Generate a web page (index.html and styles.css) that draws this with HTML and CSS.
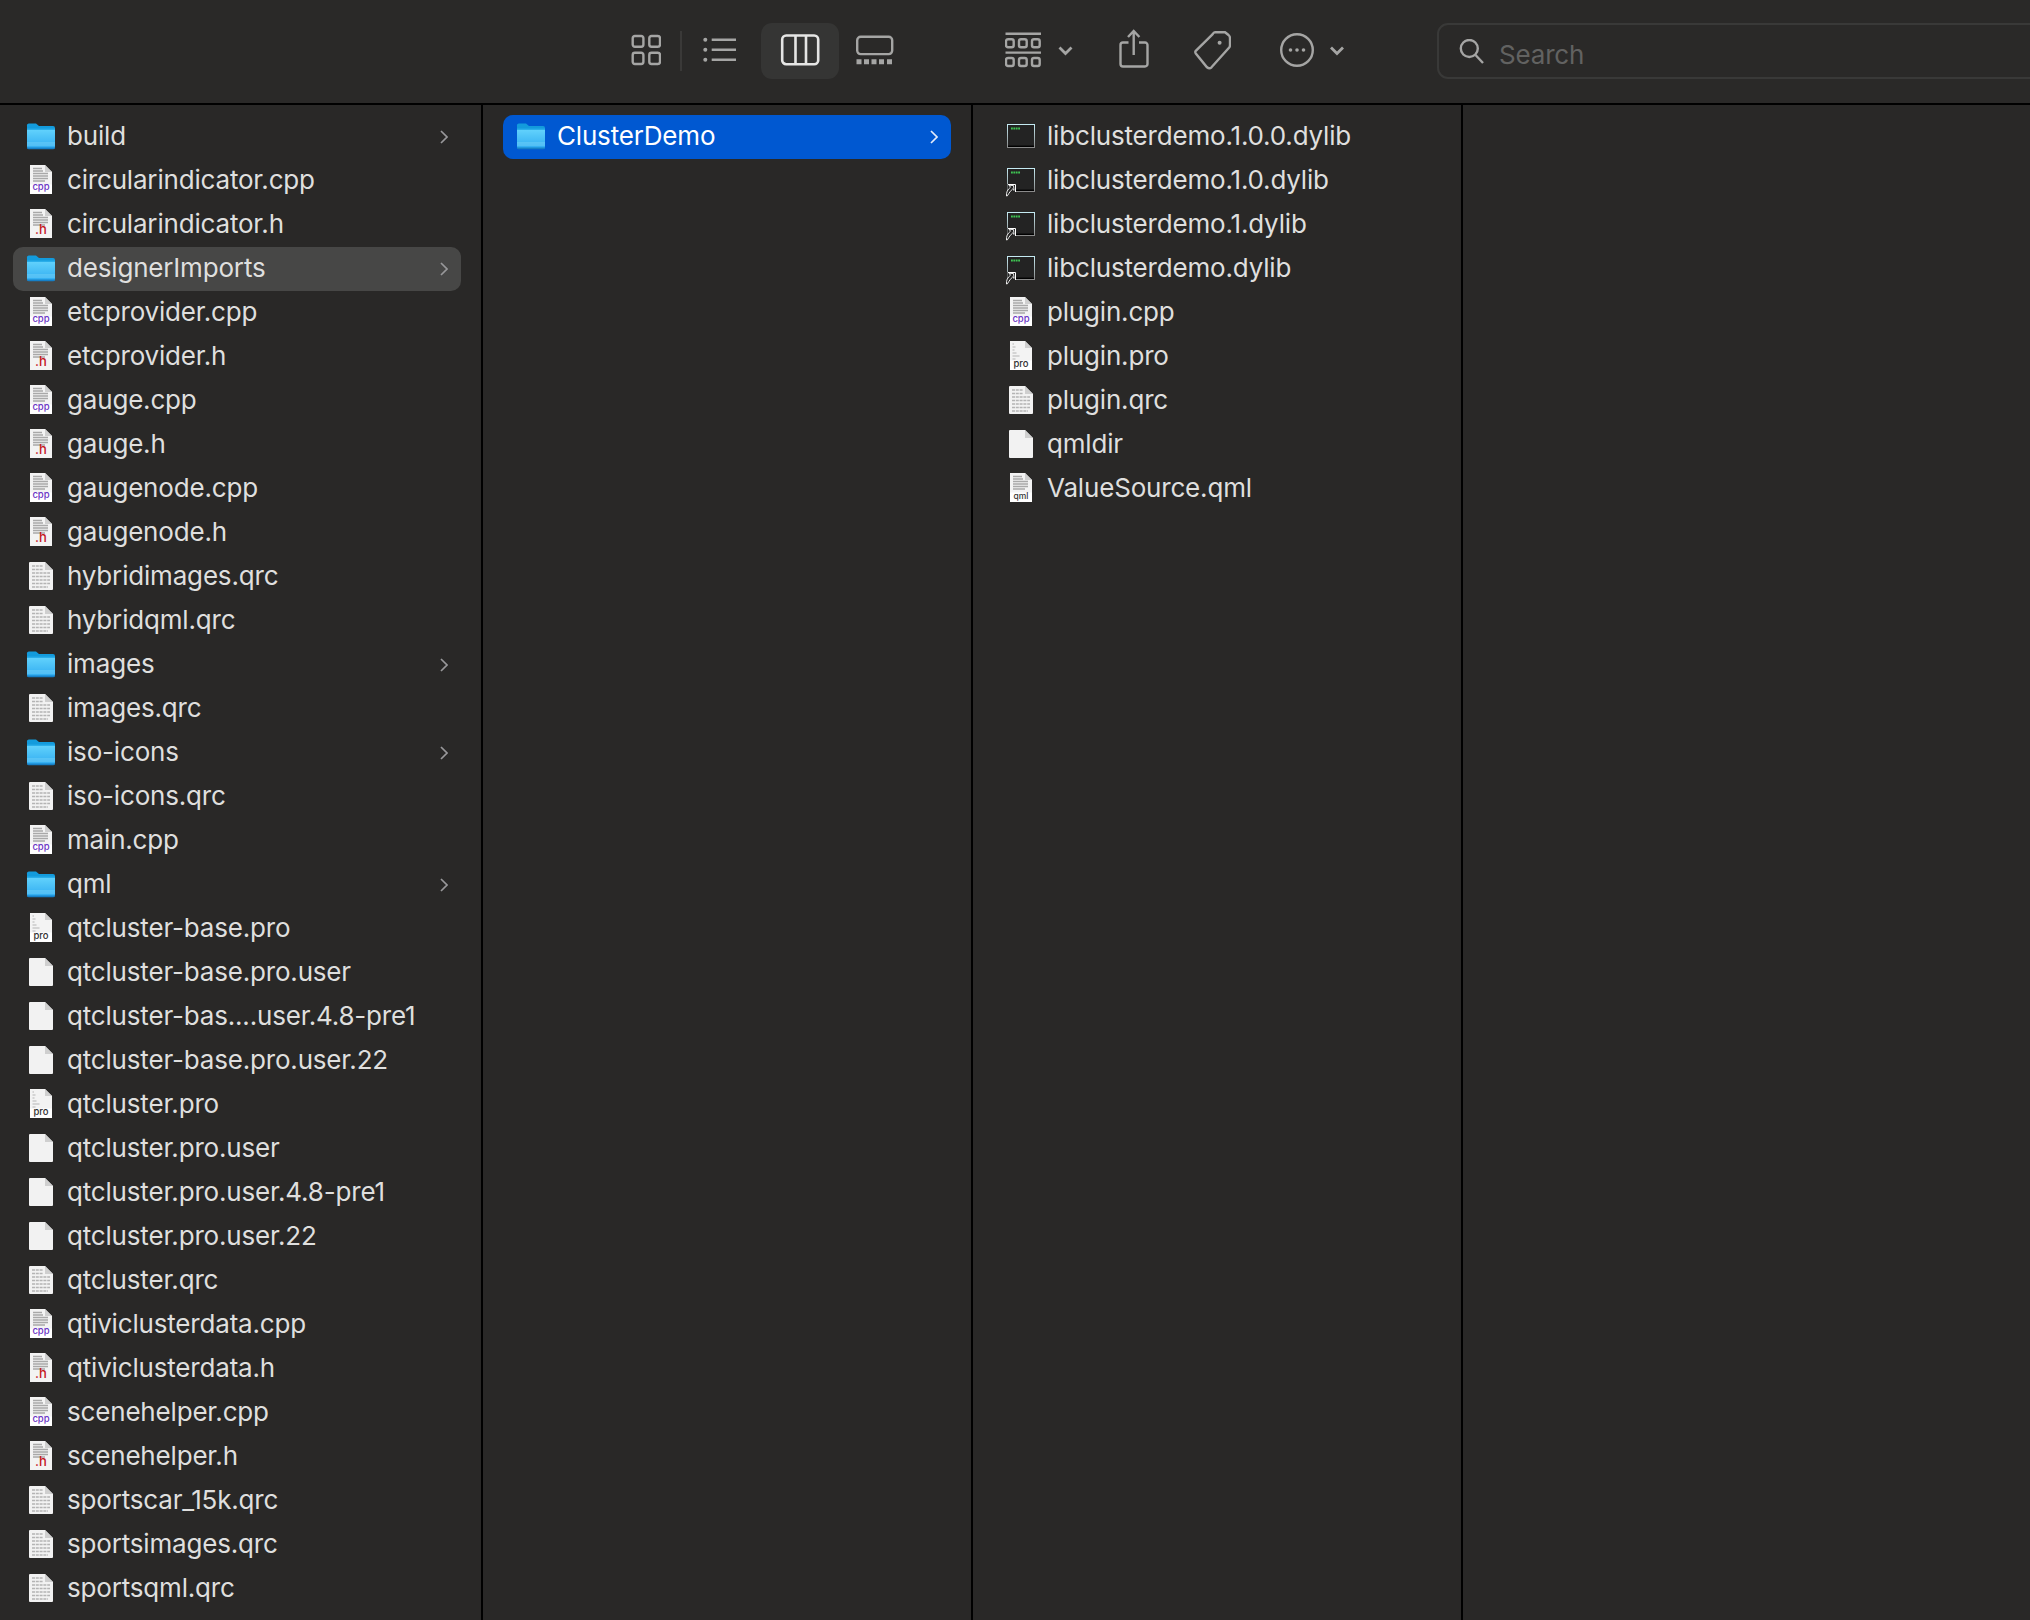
FILE: index.html
```html
<!DOCTYPE html>
<html lang="en">
<head>
<meta charset="utf-8">
<title>ClusterDemo</title>
<link rel="stylesheet" href="styles.css">
</head>
<body>
<svg class="sprite" aria-hidden="true">
  <defs>
    <linearGradient id="fb" x1="0" y1="0" x2="0" y2="1"><stop offset="0" stop-color="#62d2fc"/><stop offset="1" stop-color="#2fabf0"/></linearGradient>
    <linearGradient id="tb" x1="0" y1="0" x2="0" y2="1"><stop offset="0" stop-color="#c4eaf2"/><stop offset="1" stop-color="#8a8a8a"/></linearGradient>
    <symbol id="folder" viewBox="0 0 32 32">
      <path d="M2 5a2 2 0 0 1 2-2.600h7l3 2.600h14a2 2 0 0 1 2 2v4H2z" fill="#139bdc"/>
      <path d="M2 8.500h28V26a2 2 0 0 1-2 2H4a2 2 0 0 1-2-2z" fill="url(#fb)"/>
      <path d="M2 7.600h28v1.400H2z" fill="#2aaeea"/>
      <path d="M2 22h28M2 24h28" stroke="#7ed5fa" stroke-width=".8"/>
      <path d="M2 26.500h28V26.600a1.600 1.600 0 0 1-1.600 1.600H3.600A1.600 1.600 0 0 1 2 26.600z" fill="#1580c8"/>
    </symbol>
    <symbol id="lines" viewBox="0 0 32 32">
      <path d="M8 3.500h9M8 6h10M8 8.500h15M8 11h15M8 13.500h15M8 16h12" stroke="#a9a9a9" stroke-width="1.500"/>
    </symbol>
    <symbol id="cpp" viewBox="0 0 32 32">
      <path d="M5 0h15l7 7v22H5z" fill="#f3f3f3"/><path d="M20 0l7 7h-7z" fill="#cfcfcf"/>
      <use href="#lines" width="32" height="32"/>
      <rect x="5" y="19.500" width="22" height="9.500" fill="#fff"/>
      <text class="tag-cpp" x="16" y="25.300">cpp</text>
    </symbol>
    <symbol id="h" viewBox="0 0 32 32">
      <path d="M5 0h15l7 7v22H5z" fill="#f3f3f3"/><path d="M20 0l7 7h-7z" fill="#cfcfcf"/>
      <use href="#lines" width="32" height="32"/>
      <text class="tag-h" x="16" y="25">.h</text>
    </symbol>
    <symbol id="pro" viewBox="0 0 32 32">
      <path d="M5 0h15l7 7v22H5z" fill="#f3f3f3"/><path d="M20 0l7 7h-7z" fill="#cfcfcf"/>
      <path d="M7.500 3h1.500M7.500 6h3M7.500 9h2M7.500 12h4M7.500 15h7M7.500 18h3" stroke="#b5b5b5" stroke-width="1.200"/>
      <rect x="5" y="19.500" width="22" height="9.500" fill="#fff"/>
      <text class="tag-pro" x="16" y="25.500">pro</text>
    </symbol>
    <symbol id="qml" viewBox="0 0 32 32">
      <path d="M5 0h15l7 7v22H5z" fill="#f3f3f3"/><path d="M20 0l7 7h-7z" fill="#cfcfcf"/>
      <use href="#lines" width="32" height="32"/>
      <rect x="5" y="19.500" width="22" height="9.500" fill="#fff"/>
      <text class="tag-qml" x="16" y="25.500">qml</text>
    </symbol>
    <symbol id="qrc" viewBox="0 0 32 32">
      <path d="M4 2a1 1 0 0 1 1-1h15l8 8v19a1 1 0 0 1-1 1H5a1 1 0 0 1-1-1z" fill="#f2f2f2"/><path d="M20 1l8 8h-8z" fill="#cfcfcf"/>
      <path d="M7 5h11M7 8.500h11M7 12h18M7 15.500h18M7 19h18M7 22.500h18M7 26h16" stroke="#b4b4b4" stroke-width="1.600" stroke-dasharray="3 .8"/>
    </symbol>
    <symbol id="blank" viewBox="0 0 32 32">
      <path d="M4 2a1 1 0 0 1 1-1h15l8 8v19a1 1 0 0 1-1 1H5a1 1 0 0 1-1-1z" fill="#f2f2f2"/><path d="M20 1l8 8h-8z" fill="#cfcfcf"/>
    </symbol>
    <symbol id="term" viewBox="0 0 32 32">
      <rect x="2.500" y="3.500" width="27" height="23" fill="#232323" stroke="url(#tb)"/>
      <path d="M3 25.300h26" stroke="#000" stroke-width="1.400"/>
      <path d="M6 7.500h9.500" stroke="#3fc553" stroke-width="2" stroke-dasharray="1.800 .6"/>
    </symbol>
    <symbol id="link" viewBox="0 0 32 32">
      <use href="#term" width="32" height="32"/>
      <path d="M2.500 27v-8h8v8z" fill="#232323"/>
      <path d="M3 19.500h7.500v7.500" fill="none" stroke="#fff" stroke-width="1"/>
      <path d="M1.500 31c-.4-3.500 1-6.500 4-8.800l-1.500-2 4.500.4.600 4.800-1.500-1.400c-1.800 1.500-3.600 4-5.200 6.800z" fill="#232323" stroke="#fff" stroke-width=".9"/>
    </symbol>
  </defs>
</svg>

<header class="toolbar">
  <svg class="tb tb-grid" viewBox="0 0 30 44"><rect x="1.700" y="8" width="10.700" height="10.700" rx="2.200"/><rect x="18.300" y="8" width="10.700" height="10.700" rx="2.200"/><rect x="1.700" y="24.700" width="10.700" height="11.300" rx="2.200"/><rect x="18.300" y="24.700" width="10.700" height="11.300" rx="2.200"/></svg>
  <span class="sep"></span>
  <svg class="tb tb-list" viewBox="0 0 34 44"><circle class="dot" cx="2.300" cy="11.700" r="2"/><circle class="dot" cx="2.300" cy="21.700" r="2"/><circle class="dot" cx="2.300" cy="31.700" r="2"/><path d="M8.700 11.700H33M8.700 21.700H33M8.700 31.700H33"/></svg>
  <div class="pill">
    <svg class="tb tb-col" viewBox="0 0 40 44"><rect x="2.200" y="7.500" width="36" height="28.700" rx="4"/><path d="M15.500 7.500v28.700M26 7.500v28.700"/></svg>
  </div>
  <svg class="tb tb-gal" viewBox="0 0 38 44"><rect x="1.200" y="8.800" width="35" height="17.300" rx="3.500"/><path class="dot" d="M.5 31.300h5v5h-5zM8 31.300h5v5H8zM15.500 31.300h5v5h-5zM23 31.300h5v5h-5zM31 31.300h5v5h-5z"/></svg>
  <svg class="tb tb-group" viewBox="0 0 37 44"><path d="M.5 5.800h35.500M.5 24.600h35.500"/><rect x="1" y="11.300" width="7.700" height="8" rx="2"/><rect x="14" y="11.300" width="7.700" height="8" rx="2"/><rect x="27" y="11.300" width="7.700" height="8" rx="2"/><rect x="1" y="30" width="7.700" height="8" rx="2"/><rect x="14" y="30" width="7.700" height="8" rx="2"/><rect x="27" y="30" width="7.700" height="8" rx="2"/></svg>
  <svg class="tb tb-chev-a" viewBox="0 0 15 44"><path d="M1.500 19.500l6 6 6-6"/></svg>
  <svg class="tb tb-share" viewBox="0 0 30 44"><path d="M14.700 3v24M9 9l5.700-6 5.700 6M9.500 14.500H4A2.500 2.500 0 0 0 1.500 17v19A2.500 2.500 0 0 0 4 38.500h22a2.500 2.500 0 0 0 2.500-2.500V17a2.500 2.500 0 0 0-2.500-2.500h-6"/></svg>
  <svg class="tb tb-tag" viewBox="0 0 37 44"><path d="M18.500 6.300 1.800 22.800q-1 1.300 0 2.700L13 39.300q2.500 2 4.500 0l17.700-19.800q.8-1 .8-2.500V10q0-1.500-1.500-3l-3.500-2.800H21q-1.300 0-2.500 2.100z"/><circle class="dot" cx="25.600" cy="14.700" r="2"/></svg>
  <svg class="tb tb-more" viewBox="0 0 34 44"><circle cx="17" cy="22" r="15.800"/><circle class="dot" cx="10.500" cy="22" r="1.800"/><circle class="dot" cx="17" cy="22" r="1.800"/><circle class="dot" cx="23.500" cy="22" r="1.800"/></svg>
  <svg class="tb tb-chev-b" viewBox="0 0 16 44"><path d="M2 19.500l6 6 6-6"/></svg>
  <div class="search">
    <svg class="mag" viewBox="0 0 26 26"><circle cx="10.300" cy="9.500" r="8.500"/><path d="M16.500 16l7.500 8"/></svg>
    <span class="search-text">Search</span>
  </div>
</header>

<main class="browser">
  <section class="col col-first">
    <div class="row"><svg class="ic"><use href="#folder"/></svg><span class="nm">build</span><svg class="chev" viewBox="0 0 8 14"><path d="M1 1l6 6-6 6"/></svg></div>
    <div class="row"><svg class="ic"><use href="#cpp"/></svg><span class="nm">circularindicator.cpp</span></div>
    <div class="row"><svg class="ic"><use href="#h"/></svg><span class="nm">circularindicator.h</span></div>
    <div class="row row-path"><svg class="ic"><use href="#folder"/></svg><span class="nm">designerImports</span><svg class="chev" viewBox="0 0 8 14"><path d="M1 1l6 6-6 6"/></svg></div>
    <div class="row"><svg class="ic"><use href="#cpp"/></svg><span class="nm">etcprovider.cpp</span></div>
    <div class="row"><svg class="ic"><use href="#h"/></svg><span class="nm">etcprovider.h</span></div>
    <div class="row"><svg class="ic"><use href="#cpp"/></svg><span class="nm">gauge.cpp</span></div>
    <div class="row"><svg class="ic"><use href="#h"/></svg><span class="nm">gauge.h</span></div>
    <div class="row"><svg class="ic"><use href="#cpp"/></svg><span class="nm">gaugenode.cpp</span></div>
    <div class="row"><svg class="ic"><use href="#h"/></svg><span class="nm">gaugenode.h</span></div>
    <div class="row"><svg class="ic"><use href="#qrc"/></svg><span class="nm">hybridimages.qrc</span></div>
    <div class="row"><svg class="ic"><use href="#qrc"/></svg><span class="nm">hybridqml.qrc</span></div>
    <div class="row"><svg class="ic"><use href="#folder"/></svg><span class="nm">images</span><svg class="chev" viewBox="0 0 8 14"><path d="M1 1l6 6-6 6"/></svg></div>
    <div class="row"><svg class="ic"><use href="#qrc"/></svg><span class="nm">images.qrc</span></div>
    <div class="row"><svg class="ic"><use href="#folder"/></svg><span class="nm">iso-icons</span><svg class="chev" viewBox="0 0 8 14"><path d="M1 1l6 6-6 6"/></svg></div>
    <div class="row"><svg class="ic"><use href="#qrc"/></svg><span class="nm">iso-icons.qrc</span></div>
    <div class="row"><svg class="ic"><use href="#cpp"/></svg><span class="nm">main.cpp</span></div>
    <div class="row"><svg class="ic"><use href="#folder"/></svg><span class="nm">qml</span><svg class="chev" viewBox="0 0 8 14"><path d="M1 1l6 6-6 6"/></svg></div>
    <div class="row"><svg class="ic"><use href="#pro"/></svg><span class="nm">qtcluster-base.pro</span></div>
    <div class="row"><svg class="ic"><use href="#blank"/></svg><span class="nm">qtcluster-base.pro.user</span></div>
    <div class="row"><svg class="ic"><use href="#blank"/></svg><span class="nm">qtcluster-bas....user.4.8-pre1</span></div>
    <div class="row"><svg class="ic"><use href="#blank"/></svg><span class="nm">qtcluster-base.pro.user.22</span></div>
    <div class="row"><svg class="ic"><use href="#pro"/></svg><span class="nm">qtcluster.pro</span></div>
    <div class="row"><svg class="ic"><use href="#blank"/></svg><span class="nm">qtcluster.pro.user</span></div>
    <div class="row"><svg class="ic"><use href="#blank"/></svg><span class="nm">qtcluster.pro.user.4.8-pre1</span></div>
    <div class="row"><svg class="ic"><use href="#blank"/></svg><span class="nm">qtcluster.pro.user.22</span></div>
    <div class="row"><svg class="ic"><use href="#qrc"/></svg><span class="nm">qtcluster.qrc</span></div>
    <div class="row"><svg class="ic"><use href="#cpp"/></svg><span class="nm">qtiviclusterdata.cpp</span></div>
    <div class="row"><svg class="ic"><use href="#h"/></svg><span class="nm">qtiviclusterdata.h</span></div>
    <div class="row"><svg class="ic"><use href="#cpp"/></svg><span class="nm">scenehelper.cpp</span></div>
    <div class="row"><svg class="ic"><use href="#h"/></svg><span class="nm">scenehelper.h</span></div>
    <div class="row"><svg class="ic"><use href="#qrc"/></svg><span class="nm">sportscar_15k.qrc</span></div>
    <div class="row"><svg class="ic"><use href="#qrc"/></svg><span class="nm">sportsimages.qrc</span></div>
    <div class="row"><svg class="ic"><use href="#qrc"/></svg><span class="nm">sportsqml.qrc</span></div>
  </section>
  <section class="col">
    <div class="row row-sel"><svg class="ic"><use href="#folder"/></svg><span class="nm">ClusterDemo</span><svg class="chev" viewBox="0 0 8 14"><path d="M1 1l6 6-6 6"/></svg></div>
  </section>
  <section class="col">
    <div class="row"><svg class="ic"><use href="#term"/></svg><span class="nm">libclusterdemo.1.0.0.dylib</span></div>
    <div class="row"><svg class="ic"><use href="#link"/></svg><span class="nm">libclusterdemo.1.0.dylib</span></div>
    <div class="row"><svg class="ic"><use href="#link"/></svg><span class="nm">libclusterdemo.1.dylib</span></div>
    <div class="row"><svg class="ic"><use href="#link"/></svg><span class="nm">libclusterdemo.dylib</span></div>
    <div class="row"><svg class="ic"><use href="#cpp"/></svg><span class="nm">plugin.cpp</span></div>
    <div class="row"><svg class="ic"><use href="#pro"/></svg><span class="nm">plugin.pro</span></div>
    <div class="row"><svg class="ic"><use href="#qrc"/></svg><span class="nm">plugin.qrc</span></div>
    <div class="row"><svg class="ic"><use href="#blank"/></svg><span class="nm">qmldir</span></div>
    <div class="row"><svg class="ic"><use href="#qml"/></svg><span class="nm">ValueSource.qml</span></div>
  </section>
  <section class="col col-last"></section>
</main>
</body>
</html>
```
FILE: styles.css
```css
* { box-sizing: border-box; }
html, body { margin: 0; height: 100%; }
body {
  width: 2030px;
  height: 1620px;
  overflow: hidden;
  background: #292827;
  color: #dfdfde;
  font-family: Inter, "Noto Sans", sans-serif;
  font-size: 26px;
  letter-spacing: -0.18px;
}
.sprite { position: absolute; width: 0; height: 0; }

.toolbar {
  display: flex;
  align-items: center;
  height: 105px;
  padding-left: 631px;
  padding-bottom: 2px;
  background: #2a2928;
  border-bottom: 2px solid #000;
  overflow: hidden;
}
.tb { flex: none; height: 44px; margin-top: -1px; fill: none; stroke: #a5a5a4; stroke-width: 2.4; }
.tb .dot { fill: #a5a5a4; stroke: none; }
.tb-grid { width: 30px; }
.sep { flex: none; width: 2px; height: 40px; margin-left: 19px; background: #3a3938; }
.tb-list { width: 34px; margin-left: 21px; }
.pill {
  flex: none;
  display: flex;
  align-items: center;
  justify-content: center;
  width: 78px;
  height: 56px;
  margin-left: 24px;
  border-radius: 11px;
  background: #353534;
}
.tb-col { width: 40px; stroke: #e6e6e5; stroke-width: 2.6; }
.tb-gal { width: 38px; margin-left: 17px; }
.tb-group { width: 37px; margin-left: 111px; }
.tb-chev-a { width: 15px; margin-left: 16px; stroke-width: 2.8; }
.tb-share { width: 30px; margin-left: 46px; }
.tb-tag { width: 37px; margin-left: 45px; }
.tb-more { width: 34px; margin-left: 49px; }
.tb-chev-b { width: 16px; margin-left: 15px; stroke-width: 2.8; }
.search {
  flex: none;
  display: flex;
  align-items: center;
  width: 760px;
  height: 56px;
  margin-left: 92px;
  padding-left: 20px;
  border: 2px solid #393938;
  border-radius: 11px;
}
.mag { flex: none; width: 26px; height: 26px; margin-top: 2px; fill: none; stroke: #a5a5a4; stroke-width: 2.4; }
.search-text { margin-left: 14px; padding-top: 7px; color: #626261; }

.browser {
  display: grid;
  grid-template-columns: 483px 490px 490px 1fr;
  height: 1515px;
}
.col {
  padding: 10px 20px 0;
  border-right: 2px solid #000;
  min-width: 0;
}
.col-first { padding-left: 13px; }
.col-last { border-right: 0; }
.row {
  display: flex;
  align-items: center;
  height: 44px;
  padding: 0 13px 0 12px;
  border-radius: 10px;
  white-space: nowrap;
}
.row-path { background: #474746; }
.row-sel { background: #0058d1; color: #fff; }
.ic { flex: none; width: 32px; height: 32px; margin-right: 10px; align-self: flex-start; margin-top: 6px; overflow: visible; }
.nm { flex: 1; min-width: 0; padding-bottom: 3px; }
.chev { flex: none; width: 8px; height: 14px; margin-top: -1px; fill: none; stroke: #98989a; stroke-width: 1.7; }
.row-sel .chev { stroke: #e3ecfb; }

.tag-cpp, .tag-h, .tag-pro, .tag-qml { font-family: Inter, sans-serif; text-anchor: middle; letter-spacing: 0; font-weight: 500; }
.tag-cpp { font-size: 9.500px; fill: #6a34c4; }
.tag-h { font-size: 13px; fill: #c3161c; }
.tag-pro { font-size: 9.500px; fill: #333; }
.tag-qml { font-size: 8.500px; fill: #333; }
```
